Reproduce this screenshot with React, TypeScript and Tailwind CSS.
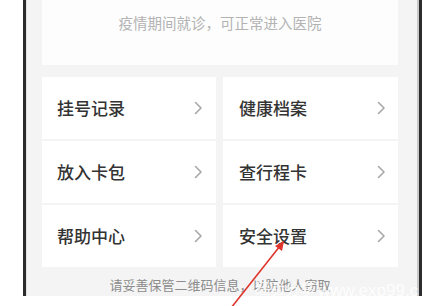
import React from "react";

const Chevron = () => (
  <svg width="9" height="14" viewBox="0 0 9 14" fill="none">
    <path d="M1.5 1.5 L7 7 L1.5 12.5" stroke="#a8a8a8" strokeWidth="1.6" strokeLinecap="round" strokeLinejoin="round" />
  </svg>
);

const items = ["挂号记录", "健康档案", "放入卡包", "查行程卡", "帮助中心", "安全设置"];

export default function App() {
  return (
    <div
      className="relative w-[448px] h-[306px] bg-white overflow-hidden"
      style={{ fontFamily: '"Noto Sans CJK SC", "Noto Sans", sans-serif' }}
    >
      <div className="relative ml-[23px] w-[399px] h-[296px] border-l-[3px] border-r-[3px] border-[#2c2c2c] bg-[#f4f4f4] overflow-hidden">
        <div className="h-full border-l border-r-2 border-l-[#e2e2e2] border-r-[#c9c9c9] pl-[15px] pr-[19px]">
          <div className="h-[65px] bg-[#fdfdfd] flex justify-center pt-[13px]">
            <span className="text-[14.5px] leading-[20px] text-[#b3b3b3]">疫情期间就诊，可正常进入医院</span>
          </div>
          <div className="mt-[12px] grid grid-cols-[174px_175px] gap-x-[7px] gap-y-[2px]">
            {items.map((t, i) => (
              <div
                key={t}
                className={`h-[62px] bg-white flex items-center justify-between ${i % 2 === 0 ? "pl-[15px] pr-[13px]" : "pl-[16px] pr-[12px]"}`}
              >
                <span className="text-[17px] font-medium text-[#333333] tracking-[0px]">{t}</span>
                <Chevron />
              </div>
            ))}
          </div>
          <div className="mt-[10px] flex justify-center">
            <span className="text-[13px] leading-[16px] text-[#8c8c8c]">请妥善保管二维码信息，以防他人窃取</span>
          </div>
        </div>
        <span
          className="absolute left-[229px] top-[277px] text-[15px] text-white opacity-80"
        >
          经验分享
        </span>
        <span
          className="absolute left-[292px] top-[278px] text-[17px] text-white opacity-90"
          style={{ fontFamily: '"Liberation Sans", Arial, sans-serif' }}
        >
          www.exp99.co
        </span>
      </div>
      <svg className="absolute left-0 top-0" width="448" height="306" viewBox="0 0 448 306">
        <line x1="231" y1="308" x2="280" y2="246" stroke="#e0342c" strokeWidth="1.6" />
        <polygon points="284,241 275,246 282,251" fill="#e0342c" />
      </svg>
    </div>
  );
}
